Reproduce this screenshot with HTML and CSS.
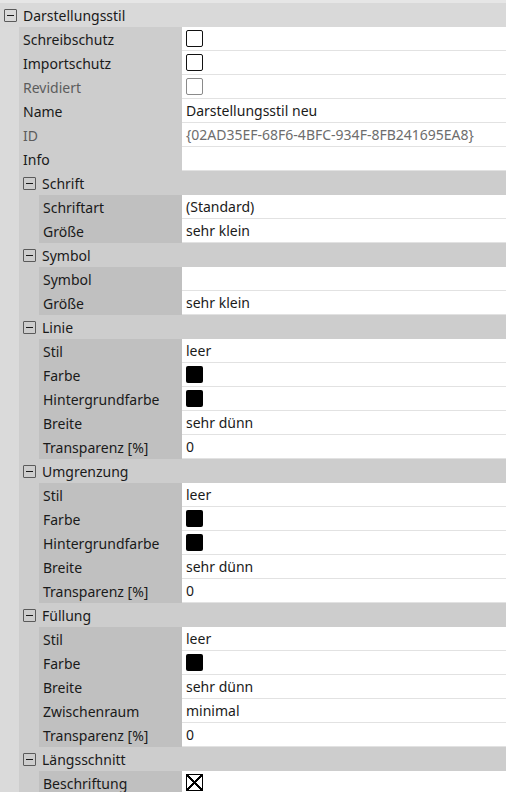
FILE: index.html
```html
<!DOCTYPE html>
<html lang="de">
<head>
    <meta charset="UTF-8">
    <meta name="viewport" content="width=device-width, initial-scale=1.0">
    <title>Eigenschaften</title>
    <link rel="stylesheet" href="styles.css">
</head>
<body>
    <div class="grid">
        <div class="group top">
            <div class="ghead"><span class="toggle"></span>Darstellungsstil</div>
            <div class="gbody">
                <div class="row"><div class="lbl">Schreibschutz</div><div class="val"><span class="cb"></span></div></div>
                <div class="row"><div class="lbl">Importschutz</div><div class="val"><span class="cb"></span></div></div>
                <div class="row off"><div class="lbl">Revidiert</div><div class="val"><span class="cb"></span></div></div>
                <div class="row"><div class="lbl">Name</div><div class="val">Darstellungsstil neu</div></div>
                <div class="row off"><div class="lbl">ID</div><div class="val">{02AD35EF-68F6-4BFC-934F-8FB241695EA8}</div></div>
                <div class="row"><div class="lbl">Info</div><div class="val"></div></div>

                <div class="group">
                    <div class="ghead"><span class="toggle"></span>Schrift</div>
                    <div class="gbody">
                        <div class="row"><div class="lbl">Schriftart</div><div class="val">(Standard)</div></div>
                        <div class="row"><div class="lbl">Größe</div><div class="val">sehr klein</div></div>
                    </div>
                </div>

                <div class="group">
                    <div class="ghead"><span class="toggle"></span>Symbol</div>
                    <div class="gbody">
                        <div class="row"><div class="lbl">Symbol</div><div class="val"></div></div>
                        <div class="row"><div class="lbl">Größe</div><div class="val">sehr klein</div></div>
                    </div>
                </div>

                <div class="group">
                    <div class="ghead"><span class="toggle"></span>Linie</div>
                    <div class="gbody">
                        <div class="row"><div class="lbl">Stil</div><div class="val">leer</div></div>
                        <div class="row"><div class="lbl">Farbe</div><div class="val"><span class="swatch"></span></div></div>
                        <div class="row"><div class="lbl">Hintergrundfarbe</div><div class="val"><span class="swatch"></span></div></div>
                        <div class="row"><div class="lbl">Breite</div><div class="val">sehr dünn</div></div>
                        <div class="row"><div class="lbl">Transparenz [%]</div><div class="val">0</div></div>
                    </div>
                </div>

                <div class="group">
                    <div class="ghead"><span class="toggle"></span>Umgrenzung</div>
                    <div class="gbody">
                        <div class="row"><div class="lbl">Stil</div><div class="val">leer</div></div>
                        <div class="row"><div class="lbl">Farbe</div><div class="val"><span class="swatch"></span></div></div>
                        <div class="row"><div class="lbl">Hintergrundfarbe</div><div class="val"><span class="swatch"></span></div></div>
                        <div class="row"><div class="lbl">Breite</div><div class="val">sehr dünn</div></div>
                        <div class="row"><div class="lbl">Transparenz [%]</div><div class="val">0</div></div>
                    </div>
                </div>

                <div class="group">
                    <div class="ghead"><span class="toggle"></span>Füllung</div>
                    <div class="gbody">
                        <div class="row"><div class="lbl">Stil</div><div class="val">leer</div></div>
                        <div class="row"><div class="lbl">Farbe</div><div class="val"><span class="swatch"></span></div></div>
                        <div class="row"><div class="lbl">Breite</div><div class="val">sehr dünn</div></div>
                        <div class="row"><div class="lbl">Zwischenraum</div><div class="val">minimal</div></div>
                        <div class="row"><div class="lbl">Transparenz [%]</div><div class="val">0</div></div>
                    </div>
                </div>

                <div class="group">
                    <div class="ghead"><span class="toggle"></span>Längsschnitt</div>
                    <div class="gbody">
                        <div class="row"><div class="lbl">Beschriftung</div><div class="val"><span class="cb checked"></span></div></div>
                    </div>
                </div>
            </div>
        </div>
    </div>
</body>
</html>
```
FILE: styles.css
```css
body {
    margin: 0;
    background: #e6e6e6;
    font-family: "Noto Sans", "Open Sans", sans-serif;
    font-size: 14px;
    color: #1a1a1a;
    overflow: hidden;
}
.grid {
    padding-top: 3px;
    width: 506px;
}
.ghead {
    height: 24px;
    display: flex;
    align-items: center;
    padding-left: 4px;
    background: #cdcdcd;
}
.top > .ghead {
    background: #d9d9d9;
}
.toggle {
    width: 11px;
    height: 11px;
    border: 1px solid #5a5a5a;
    border-radius: 1px;
    margin-right: 6px;
    position: relative;
    flex: none;
}
.toggle::after {
    content: "";
    position: absolute;
    left: 2px;
    right: 2px;
    top: 5px;
    height: 1px;
    background: #1a1a1a;
}
.gbody {
    padding-left: 20px;
    background: #cdcdcd;
}
.top > .gbody {
    padding-left: 19px;
    background: #dadada;
}
.row {
    display: flex;
    height: 24px;
}
.lbl {
    flex: 1;
    display: flex;
    align-items: center;
    padding-left: 4px;
    background: #c0c0c0;
}
.top > .gbody > .row > .lbl {
    background: #cdcdcd;
}
.val {
    width: 324px;
    padding-left: 4px;
    display: flex;
    align-items: center;
    background: #fff;
    border-bottom: 1px solid #e2e2e2;
    box-sizing: border-box;
    white-space: nowrap;
}
.off .lbl {
    color: #5c5c5c;
}
.off .val {
    color: #6d6d6d;
}
.cb {
    width: 17px;
    height: 17px;
    box-sizing: border-box;
    border: 1.5px solid #111;
    border-radius: 2px;
    position: relative;
}
.off .cb {
    border-color: #8a8a8a;
    border-width: 1px;
}
.cb.checked {
    border-width: 1px;
    border-color: #000;
    border-radius: 0;
    background:
        linear-gradient(45deg, transparent calc(50% - 0.8px), #000 calc(50% - 0.8px), #000 calc(50% + 0.8px), transparent calc(50% + 0.8px)),
        linear-gradient(-45deg, transparent calc(50% - 0.8px), #000 calc(50% - 0.8px), #000 calc(50% + 0.8px), transparent calc(50% + 0.8px));
}
.swatch {
    width: 17px;
    height: 17px;
    background: #000;
    border-radius: 2px;
}
```
